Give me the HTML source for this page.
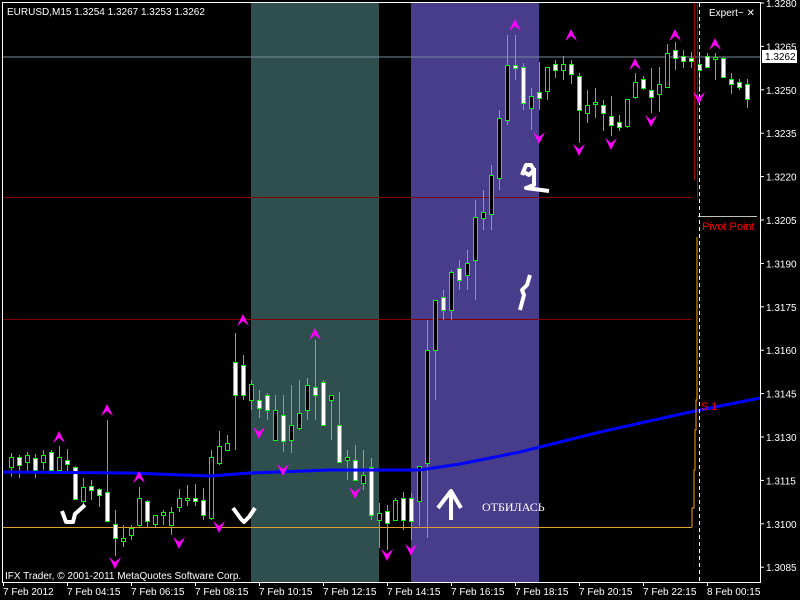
<!DOCTYPE html>
<html><head><meta charset="utf-8"><style>
html,body{margin:0;padding:0;background:#000;width:800px;height:600px;overflow:hidden}
svg{display:block}
text{font-family:"Liberation Sans",sans-serif;font-size:10px;fill:#fff}
</style></head><body>
<svg id="s" width="800" height="600" xmlns="http://www.w3.org/2000/svg">
<rect width="800" height="600" fill="#000"/>
<rect x="251" y="3" width="128" height="579" fill="#2f4f4f"/>
<rect x="411" y="3" width="128" height="579" fill="#483d8b"/>
<line x1="3" y1="57" x2="760" y2="57" stroke="#778899"/>
<line x1="3" y1="197.5" x2="692" y2="197.5" stroke="#800000"/>
<line x1="3" y1="319.5" x2="692" y2="319.5" stroke="#800000"/>
<line x1="3" y1="527.5" x2="692" y2="527.5" stroke="#e0a030"/>
<line x1="698" y1="216.5" x2="757" y2="216.5" stroke="#c0c0c0"/>
<g id="c"></g>
<polyline fill="none" stroke="#0000ff" stroke-width="3" points="3,472 130,473 210,476 250,473 330,470 420,470 460,464 520,452 600,432 690,412 760,398"/>
<g stroke="#a00" fill="none"><line x1="694.5" y1="3" x2="694.5" y2="180"/><line x1="697.5" y1="3" x2="697.5" y2="200"/></g>
<g stroke="#ffa500" fill="none"><polyline points="692,527 692,508 694,508 694,470 695,470 695,430 696,430 696,400 697,400 697,237"/></g>
<line x1="693.5" y1="527" x2="693.5" y2="568" stroke="#000080"/>
<line x1="699.5" y1="3" x2="699.5" y2="582" stroke="#fff" stroke-dasharray="4,3"/>
<g id="a" fill="#ff00ff"></g>
<g fill="none" stroke="#fff" stroke-width="4" stroke-linejoin="round">
<polyline points="62,511 66,522 73,522 75,514 85,505"/>
<polyline points="233,508 241,519 244,522 249,517 255,508"/>
<polyline points="451,520 451,492"/><polyline points="438,508 451,491 461,508"/>
<polyline points="522,175 526,165 531,165 534,170 529,175 524,172"/><polyline points="534,168 534,185 526,188 549,191"/>
<polyline points="530,275 527,285 522,290 524,295 520,310"/>
</g>
<text x="482" y="511" style="font-family:'Liberation Serif',serif;font-size:12px">ОТБИЛАСЬ</text>
<text x="7" y="15">EURUSD,M15  1.3254 1.3267 1.3253 1.3262</text>
<text x="5" y="579">IFX Trader, © 2001-2011 MetaQuotes Software Corp.</text>
<text x="709" y="16">Expert~  ✕</text>
<text x="702" y="230" style="fill:#f00;font-size:11px">Pivot Point</text>
<text x="701" y="410" style="fill:#f00;font-size:11px">S 1</text>
<rect x="2.5" y="2.5" width="758" height="580" fill="none" stroke="#fff"/>
<g id="ax"></g>
</svg>
<script>
var NS="http://www.w3.org/2000/svg";
function el(p,t,a,txt){var e=document.createElementNS(NS,t);for(var k in a)e.setAttribute(k,a[k]);if(txt)e.textContent=txt;p.appendChild(e);return e;}
var c=document.getElementById('c');
var d=[[453,477,457,467,0],[455,478,457,465,1],[452,472,455,462,0],[454,478,458,470,1],[450,470,455,462,0],[450,470,452,470,1],[446,472,457,470,0],[449,472,460,464,1],[466,500,467,499,1],[478,505,487,501,0],[480,500,486,490,1],[488,507,489,495,1],[420,520,492,521,1],[510,556,524,538,1],[525,547,538,541,0],[525,540,528,535,0],[487,527,498,525,0],[500,527,501,521,1],[515,527,515,524,0],[510,525,512,515,0],[507,535,512,525,0],[489,512,498,507,0],[485,506,498,500,0],[484,506,498,501,1],[488,520,500,515,1],[450,520,457,518,0],[431,465,446,463,0],[435,450,443,450,0],[333,450,362,395,1],[355,400,365,395,1],[380,410,384,400,0],[390,418,400,408,1],[393,420,395,410,1],[395,440,410,440,0],[395,452,415,441,1],[385,453,425,440,0],[380,430,413,428,0],[378,420,385,410,0],[340,420,387,395,1],[380,425,382,425,1],[395,440,395,400,0],[392,460,425,462,1],[450,480,457,460,0],[445,480,460,480,1],[450,490,475,483,0],[458,520,467,515,1],[503,548,513,520,0],[505,550,511,523,1],[498,510,500,520,0],[492,530,498,520,1],[493,540,498,521,1],[488,526,466,501,0],[320,538,350,463,0],[300,400,300,350,0],[290,320,297,310,1],[270,320,272,310,0],[260,290,268,280,1],[250,290,263,275,0],[200,300,217,260,0],[190,230,212,218,0],[165,230,175,214,0],[110,190,118,178,0],[35,125,65,120,0],[35,80,65,68,1],[63,110,67,103,1],[88,130,96,108,0],[62,110,92,98,1],[67,100,67,91,0],[60,78,64,70,1],[56,80,64,70,0],[60,84,64,74,1],[73,143,76,110,1],[90,123,105,113,0],[88,118,102,103,0],[100,131,105,113,1],[96,136,116,125,1],[115,131,122,127,1],[99,128,99,126,0],[73,99,82,97,0],[76,90,79,88,1],[68,113,90,97,1],[67,112,84,94,0],[44,87,53,87,0],[42,70,50,58,1],[50,68,56,61,1],[52,68,58,61,1],[54,92,64,70,1],[53,66,56,67,1],[53,80,57,58,0],[57,73,58,77,1],[73,94,79,84,1],[79,90,82,87,1],[79,108,84,99,1]];
d.forEach(function(b,i){var x=11+8*i;if(x>757)return;
el(c,'line',{x1:x+.5,y1:b[0],x2:x+.5,y2:b[1],stroke:'#00ff00'});
var t=Math.min(b[2],b[3]),h=Math.max(2,Math.abs(b[3]-b[2]));
el(c,'rect',{x:x-1.5,y:t+.5,width:4,height:h,fill:b[4]?'#fff':'#000',stroke:'#00ff00'});});
var a=document.getElementById('a');
[[59,437],[107,410],[139,477],[243,320],[315,334],[515,25],[571,35],[635,64],[675,35],[715,44]].forEach(function(p){
el(a,'path',{d:'M'+(p[0]-6)+' '+(p[1]+6)+' L'+p[0]+' '+(p[1]-6)+' L'+(p[0]+6)+' '+(p[1]+6)+' L'+p[0]+' '+(p[1]+1)+'Z'});});
[[115,563],[179,543],[219,527],[259,433],[283,470],[355,493],[387,555],[411,550],[539,138],[579,150],[611,144],[651,121],[699,98]].forEach(function(p){
el(a,'path',{d:'M'+(p[0]-6)+' '+(p[1]-6)+' L'+p[0]+' '+(p[1]+6)+' L'+(p[0]+6)+' '+(p[1]-6)+' L'+p[0]+' '+(p[1]-1)+'Z'});});
var ax=document.getElementById('ax');
var pr=['1.3280','1.3265','1.3250','1.3235','1.3220','1.3205','1.3190','1.3175','1.3160','1.3145','1.3130','1.3115','1.3100','1.3085'];
pr.forEach(function(p,i){var y=3+i*43.4;el(ax,'line',{x1:760,y1:y,x2:764,y2:y,stroke:'#fff'});el(ax,'text',{x:766,y:y+4},p);});
el(ax,'rect',{x:762,y:50,width:35,height:13,fill:'#fff'});el(ax,'text',{x:765,y:60,style:'fill:#000'},'1.3262');
var tl=['7 Feb 2012','7 Feb 04:15','7 Feb 06:15','7 Feb 08:15','7 Feb 10:15','7 Feb 12:15','7 Feb 14:15','7 Feb 16:15','7 Feb 18:15','7 Feb 20:15','7 Feb 22:15','8 Feb 00:15'];
tl.forEach(function(t,i){var x=3+64*i;el(ax,'line',{x1:x+.5,y1:582,x2:x+.5,y2:586,stroke:'#fff'});el(ax,'text',{x:x,y:595},t);});
</script>
</body></html>
